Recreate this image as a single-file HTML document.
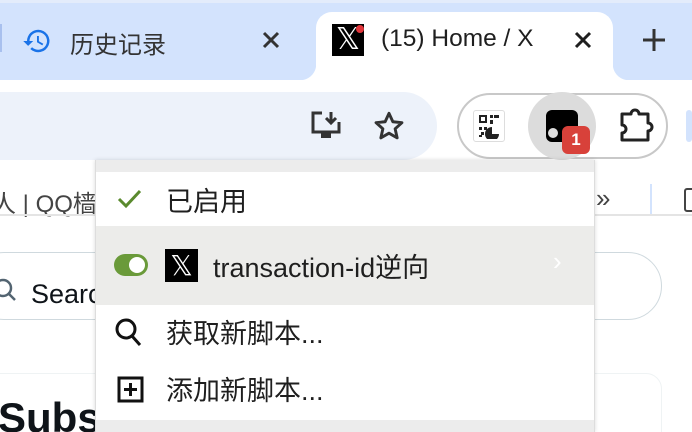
<!DOCTYPE html>
<html><head><meta charset="utf-8"><style>
*{margin:0;padding:0;box-sizing:border-box}
html,body{width:692px;height:432px;overflow:hidden}
body{position:relative;background:#fff;font-family:"Liberation Sans","Noto Sans CJK SC",sans-serif;color:#1f1f1f}
.a{position:absolute}
</style></head><body>
<div class="a" style="left:0;top:0;width:692px;height:80px;background:#d3e3fd"></div>
<div class="a" style="left:0;top:0;width:692px;height:3px;background:#e3ecfb"></div>
<div class="a" style="left:0;top:24px;width:2px;height:28px;background:#a8c0ee"></div>
<svg class="a" style="left:22px;top:26px" width="30" height="30" viewBox="0 0 24 24"><path d="M13 3a9 9 0 0 0-9 9H1l3.9 3.9L9 12H6a7 7 0 1 1 2.05 4.95l-1.42 1.42A9 9 0 1 0 13 3zm-1 5v5l4.25 2.52.77-1.28-3.52-2.09V8z" fill="#1a73e8"/></svg>
<div class="a" style="left:70px;top:25px;font-size:24px;color:#333">历史记录</div>
<svg class="a" style="left:262px;top:31px" width="18" height="18" viewBox="0 0 18 18"><path d="M2 2l14 14M16 2L2 16" stroke="#333" stroke-width="3"/></svg>
<div class="a" style="left:316px;top:12px;width:297px;height:68px;background:#fff;border-radius:16px 16px 0 0"></div>
<div class="a" style="left:300px;top:64px;width:16px;height:16px;background:radial-gradient(circle at 0 0,#d3e3fd 16px,#fff 16.5px)"></div>
<div class="a" style="left:613px;top:64px;width:16px;height:16px;background:radial-gradient(circle at 100% 0,#d3e3fd 16px,#fff 16.5px)"></div>
<div class="a" style="left:332px;top:24px;width:32px;height:32px;background:#000;color:#fff;font-size:30px;line-height:32px;text-align:center;font-family:'DejaVu Sans',sans-serif">𝕏</div>
<div class="a" style="left:356px;top:25px;width:8px;height:8px;border-radius:50%;background:#e0353a"></div>
<div class="a" style="left:381px;top:25px;font-size:24.5px;color:#1f1f1f">(15) Home / X</div>
<svg class="a" style="left:574px;top:31px" width="18" height="18" viewBox="0 0 18 18"><path d="M2 2l14 14M16 2L2 16" stroke="#1f1f1f" stroke-width="3"/></svg>
<svg class="a" style="left:643px;top:29px" width="22" height="22" viewBox="0 0 22 22"><path d="M11 0v22M0 11h22" stroke="#333" stroke-width="3"/></svg>
<div class="a" style="left:-40px;top:92px;width:477px;height:68px;background:#edf2fa;border-radius:34px"></div>
<svg class="a" style="left:308px;top:110px" width="36" height="32" viewBox="0 0 36 32"><path d="M14 3H5v19h26V12" fill="none" stroke="#333" stroke-width="3"/><path d="M23 2v11m-5-5l5 5 5-5" fill="none" stroke="#333" stroke-width="3"/><rect x="13" y="23" width="10" height="5" fill="#333"/></svg>
<svg class="a" style="left:373px;top:110px" width="32" height="32" viewBox="0 0 24 24"><path d="M12 2.5l2.9 6.3 6.8.7-5.1 4.6 1.5 6.8L12 17.4l-6.1 3.5 1.5-6.8-5.1-4.6 6.8-.7z" fill="none" stroke="#333" stroke-width="2.2" stroke-linejoin="round"/></svg>
<div class="a" style="left:457px;top:93px;width:211px;height:66px;border:2px solid #c8c8c8;border-radius:33px"></div>
<div class="a" style="left:473px;top:110px;width:32px;height:32px;background:#fff;border:1px solid #ddd;border-radius:3px"></div>
<svg class="a" style="left:477px;top:113px" width="26" height="26" viewBox="0 0 26 26" fill="#222"><rect x="2" y="2" width="8" height="8"/><rect x="4" y="4" width="4" height="4" fill="#fff"/><rect x="13" y="2" width="3" height="3"/><rect x="17" y="2" width="5" height="3"/><rect x="13" y="7" width="3" height="4"/><rect x="2" y="14" width="3" height="3"/><rect x="7" y="14" width="3" height="3"/><rect x="4" y="19" width="3" height="3"/><rect x="2" y="22" width="3" height="2"/><path d="M15 14a7 7 0 1 0 7 7h-7z"/></svg>
<div class="a" style="left:528px;top:92px;width:68px;height:68px;border-radius:50%;background:#dcdcdc"></div>
<div class="a" style="left:546px;top:110px;width:32px;height:32px;background:#000;border-radius:6px"></div>
<div class="a" style="left:546px;top:126px;width:14px;height:14px;border-radius:50%;background:#ddd;border:2px solid #000"></div>
<div class="a" style="left:562px;top:126px;width:28px;height:28px;background:#d8413a;border-radius:6px;color:#fff;font-weight:bold;font-size:17px;line-height:28px;text-align:center">1</div>
<svg class="a" style="left:618px;top:108px" width="36" height="36" viewBox="0 0 36 36"><path d="M4 6h9a4 4 0 0 1 8 0h9v9a4 4 0 0 1 0 8v9H4v-7a4 4 0 0 0 0-8z" fill="none" stroke="#222" stroke-width="3" stroke-linejoin="round"/></svg>
<div class="a" style="left:686px;top:110px;width:6px;height:32px;background:#d3e3fd;border-radius:3px"></div>
<div class="a" style="left:-8px;top:184px;font-size:24px;color:#444">人 | QQ樯</div>
<div class="a" style="left:596px;top:183px;font-size:26px;color:#444">»</div>
<div class="a" style="left:650px;top:184px;width:2px;height:30px;background:#d3e3fd"></div>
<div class="a" style="left:684px;top:188px;width:12px;height:24px;border:2px solid #444;border-radius:3px"></div>
<div class="a" style="left:0;top:214px;width:692px;height:2px;background:#e4e4e4"></div>
<div class="a" style="left:-30px;top:252px;width:692px;height:68px;border:1.5px solid #cfd9de;border-radius:34px"></div>
<svg class="a" style="left:-6px;top:278px" width="26" height="26" viewBox="0 0 26 26"><circle cx="9" cy="10" r="8" fill="none" stroke="#536471" stroke-width="2.5"/><path d="M15 16l6 6" stroke="#536471" stroke-width="2.5"/></svg>
<div class="a" style="left:31px;top:279px;font-size:27px;color:#0f1419">Search</div>
<div class="a" style="left:-20px;top:373px;width:682px;height:80px;border:1.5px solid #eff3f4;border-radius:16px"></div>
<div class="a" style="left:-2px;top:394px;font-size:42px;font-weight:bold;color:#0f1419">Subscribe</div>
<div class="a" style="left:95px;top:160px;width:500px;height:272px;background:#fff;border-left:1px solid #ddd;border-right:1px solid #ddd;box-shadow:0 0 4px rgba(0,0,0,.15)">
 <div class="a" style="left:0;top:0;width:498px;height:12px;background:#ececec"></div>
 <svg class="a" style="left:20px;top:28px" width="26" height="22" viewBox="0 0 26 22"><path d="M3 11l7 7L24 3" fill="none" stroke="#5a8a2e" stroke-width="3"/></svg>
 <div class="a" style="left:70px;top:20px;font-size:27px;color:#1f1f1f">已启用</div>
 <div class="a" style="left:0;top:66px;width:498px;height:79px;background:#ececea"></div>
 <div class="a" style="left:18px;top:94px;width:34px;height:22px;border-radius:11px;background:#6a9a3a"></div>
 <div class="a" style="left:33px;top:97px;width:16px;height:16px;border-radius:50%;background:#fff"></div>
 <div class="a" style="left:69px;top:89px;width:33px;height:33px;background:#000;color:#fff;font-size:28px;line-height:33px;text-align:center;font-family:'DejaVu Sans',sans-serif">𝕏</div>
 <div class="a" style="left:117px;top:86px;font-size:27px;color:#1f1f1f">transaction-id逆向</div>
 <div class="a" style="left:457px;top:86px;font-size:26px;color:#fff">›</div>
 <svg class="a" style="left:18px;top:156px" width="30" height="32" viewBox="0 0 30 32"><circle cx="12" cy="13" r="9" fill="none" stroke="#111" stroke-width="3"/><path d="M18 20l8 9" stroke="#111" stroke-width="3"/></svg>
 <div class="a" style="left:70px;top:152px;font-size:27px;color:#1f1f1f">获取新脚本...</div>
 <svg class="a" style="left:21px;top:216px" width="28" height="28" viewBox="0 0 28 28"><rect x="2" y="2" width="23" height="23" fill="none" stroke="#111" stroke-width="3"/><path d="M13.5 7v13M7 13.5h13" stroke="#111" stroke-width="3"/></svg>
 <div class="a" style="left:70px;top:209px;font-size:27px;color:#1f1f1f">添加新脚本...</div>
 <div class="a" style="left:0;top:260px;width:498px;height:12px;background:#ececec"></div>
</div>
</body></html>
